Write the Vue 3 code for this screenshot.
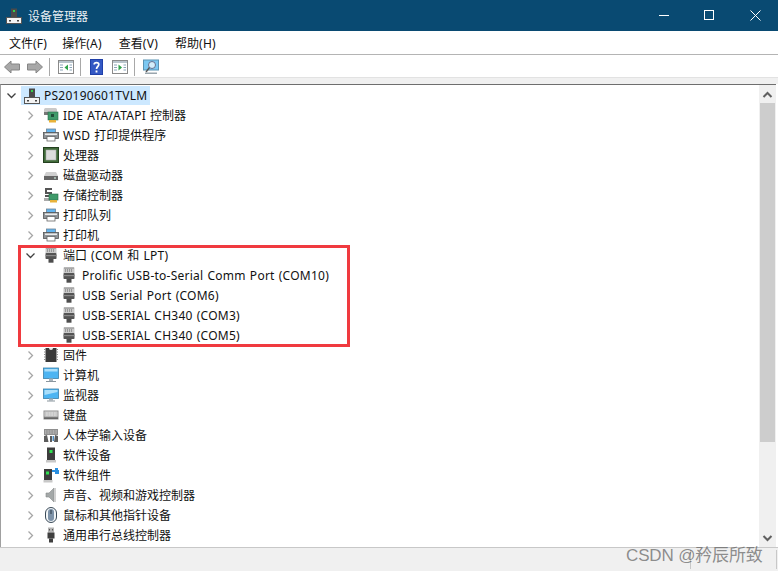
<script setup>
const menus = ['文件(F)', '操作(A)', '查看(V)', '帮助(H)']
const parts = (s) =>
  s.split(/([\u0000-\u024f]+)/).filter(Boolean).map((t) => ({ t, latin: /^[\u0000-\u024f]/.test(t) }))
const rows = [
  { label: 'IDE ATA/ATAPI 控制器', icon: 'ide', kind: 'closed' },
  { label: 'WSD 打印提供程序', icon: 'printer', kind: 'closed' },
  { label: '处理器', icon: 'cpu', kind: 'closed' },
  { label: '磁盘驱动器', icon: 'disk', kind: 'closed' },
  { label: '存储控制器', icon: 'storage', kind: 'closed' },
  { label: '打印队列', icon: 'printer', kind: 'closed' },
  { label: '打印机', icon: 'printer', kind: 'closed' },
  { label: '端口 (COM 和 LPT)', icon: 'port', kind: 'open' },
  { label: 'Prolific USB-to-Serial Comm Port (COM10)', icon: 'port', kind: 'child' },
  { label: 'USB Serial Port (COM6)', icon: 'port', kind: 'child' },
  { label: 'USB-SERIAL CH340 (COM3)', icon: 'port', kind: 'child' },
  { label: 'USB-SERIAL CH340 (COM5)', icon: 'port', kind: 'child' },
  { label: '固件', icon: 'firmware', kind: 'closed' },
  { label: '计算机', icon: 'computer', kind: 'closed' },
  { label: '监视器', icon: 'monitor', kind: 'closed' },
  { label: '键盘', icon: 'keyboard', kind: 'closed' },
  { label: '人体学输入设备', icon: 'hid', kind: 'closed' },
  { label: '软件设备', icon: 'softdev', kind: 'closed' },
  { label: '软件组件', icon: 'softcomp', kind: 'closed' },
  { label: '声音、视频和游戏控制器', icon: 'sound', kind: 'closed' },
  { label: '鼠标和其他指针设备', icon: 'mouse', kind: 'closed' },
  { label: '通用串行总线控制器', icon: 'usb', kind: 'closed' }
]
</script>

<template>
  <div class="window">
    <svg class="defs" width="0" height="0" aria-hidden="true">
      <defs>
        <symbol id="root" viewBox="0 0 16 16">
          <rect x="5" y="0.5" width="6" height="9" fill="#4a4a4a" />
          <rect x="7" y="2" width="2" height="2" fill="#35d04a" />
          <rect x="0.5" y="9.5" width="15" height="6" fill="#f4f4f4" stroke="#555" />
          <rect x="3" y="12" width="2" height="1.5" fill="#444" />
          <rect x="11" y="12" width="2" height="1.5" fill="#444" />
        </symbol>
        <symbol id="ide" viewBox="0 0 16 16">
          <path d="M1 2.500C1 1.500 2 1 3 1h9c1 0 2 .5 2 1.500V5H1z" fill="#c9c9c9" />
          <rect x="1" y="5" width="6" height="3" fill="#777" />
          <rect x="5" y="5" width="10" height="8" fill="#3f9a6a" stroke="#2a6f4c" stroke-width=".6" />
          <rect x="8" y="7" width="3" height="3" fill="#1f4d38" />
          <rect x="6" y="13" width="7" height="2.500" fill="#e8b23a" />
        </symbol>
        <symbol id="printer" viewBox="0 0 16 16">
          <rect x="3.500" y="2" width="9" height="4" fill="#63b4ee" stroke="#6a8296" stroke-width=".8" />
          <rect x="0.500" y="5.500" width="15" height="6" fill="#8f9499" stroke="#555" stroke-width=".8" />
          <rect x="2" y="6.500" width="12" height="1.500" fill="#ececec" />
          <rect x="4" y="9.500" width="8" height="4.500" fill="#fff" stroke="#666" stroke-width=".8" />
        </symbol>
        <symbol id="cpu" viewBox="0 0 16 16">
          <rect x="0.500" y="0.500" width="15" height="15" fill="#3f6a38" stroke="#24401f" />
          <rect x="3" y="3" width="10" height="10" fill="#dcdcdc" stroke="#aaa" stroke-width=".6" />
        </symbol>
        <symbol id="disk" viewBox="0 0 16 16">
          <path d="M3 5h10l2 4H1z" fill="#d0d0d0" />
          <rect x="1" y="9" width="14" height="4" fill="#666" />
          <rect x="11" y="10.500" width="2" height="1" fill="#dfe" />
        </symbol>
        <symbol id="storage" viewBox="0 0 16 16">
          <path d="M2 1h7v2H4v2h5v5H2V8h5V7H2z" fill="#555" />
          <rect x="1" y="11" width="6" height="3" fill="#aaa" />
          <rect x="6" y="7" width="9" height="6" fill="#3f9a6a" stroke="#2a6f4c" stroke-width=".6" />
          <rect x="7" y="13" width="7" height="2.500" fill="#e8b23a" />
        </symbol>
        <symbol id="port" viewBox="0 0 16 16">
          <rect x="2.500" y="0.500" width="11" height="5.500" fill="#c9c9c9" />
          <path d="M3 1h10" stroke="#8a8a8a" />
          <path d="M4.500 2v3M6.500 2v3M8.500 2v3M10.500 2v3" stroke="#8c8c8c" stroke-width=".8" />
          <rect x="2.500" y="6" width="11" height="6" rx=".8" fill="#545454" />
          <rect x="2.500" y="8" width="11" height="1.200" fill="#8a8a8a" />
          <rect x="5.500" y="12" width="5" height="3.700" fill="#4d4d4d" />
        </symbol>
        <symbol id="firmware" viewBox="0 0 16 16">
          <rect x="2.500" y="1" width="11" height="14" fill="#3a3a3a" />
          <path d="M1 2.500h1.500M1 5h1.500M1 7.500h1.500M1 10h1.500M1 12.500h1.500M13.500 2.500H15M13.500 5H15M13.500 7.500H15M13.500 10H15M13.500 12.500H15" stroke="#8a8a8a" />
          <path d="M6 1a2 2 0 0 0 4 0z" fill="#e8e8e8" />
        </symbol>
        <symbol id="computer" viewBox="0 0 16 16">
          <rect x="0.500" y="1" width="15" height="10.500" fill="#4cb4f2" stroke="#3b7fa8" stroke-width=".8" />
          <rect x="1.500" y="2" width="13" height="2.500" fill="#a9defa" />
          <rect x="6" y="11.500" width="4" height="2.500" fill="#a8b4bc" />
          <rect x="3" y="14" width="10" height="1" fill="#8a969e" />
        </symbol>
        <symbol id="monitor" viewBox="0 0 16 16">
          <rect x="0.500" y="2" width="15" height="9.500" fill="#4cb4f2" stroke="#3b7fa8" stroke-width=".8" />
          <path d="M1.500 3h13v2l-13 3z" fill="#a9defa" />
          <rect x="6" y="11.500" width="4" height="2" fill="#a8b4bc" />
          <rect x="4" y="13.500" width="8" height="1" fill="#8a969e" />
        </symbol>
        <symbol id="keyboard" viewBox="0 0 16 16">
          <rect x="0.500" y="3.500" width="15" height="9" fill="#8f8f8f" />
          <rect x="1.500" y="4.500" width="13" height="5" fill="#dedede" />
          <path d="M2 6h12M2 8h12" stroke="#9a9a9a" stroke-width=".7" stroke-dasharray="1 .6" />
          <rect x="1" y="10.500" width="14" height="1.500" fill="#666" />
        </symbol>
        <symbol id="hid" viewBox="0 0 16 16">
          <rect x="1" y="2" width="14" height="6" fill="#8f8f8f" />
          <path d="M2 4h12M2 6h12" stroke="#dedede" stroke-width=".8" stroke-dasharray="1 .6" />
          <path d="M1 15V9l3-1 1.500 7zM7 15V9h2v6zM11 15l1-7 3 1v6z" fill="#5c5c5c" />
          <rect x="9.500" y="9" width="1.500" height="5" fill="#4d8bc0" />
        </symbol>
        <symbol id="softdev" viewBox="0 0 16 16">
          <rect x="4" y="0.500" width="8" height="13" fill="#3d3d3d" />
          <rect x="6.500" y="3" width="3" height="3" fill="#30e050" />
          <rect x="3" y="13" width="10" height="2.500" fill="#c8c8c8" />
        </symbol>
        <symbol id="softcomp" viewBox="0 0 16 16">
          <rect x="1" y="2" width="8" height="12" fill="#3d3d3d" />
          <rect x="3" y="4.500" width="3" height="3" fill="#30e050" />
          <rect x="0.500" y="13" width="9" height="2.500" fill="#c8c8c8" />
          <path d="M9 3h3V1h3v2h1v4h-4V5H9z" fill="#2a8fe0" />
        </symbol>
        <symbol id="sound" viewBox="0 0 16 16">
          <path d="M3 6h3l5-5v14l-5-5H3z" fill="#a4a8a8" stroke="#868a8a" stroke-width=".6" />
          <path d="M11 1v14h2V1z" fill="#d0d0d0" />
        </symbol>
        <symbol id="mouse" viewBox="0 0 16 16">
          <rect x="2.500" y="0.500" width="11" height="15" rx="5.500" fill="#f2f6f8" stroke="#3a4a58" />
          <rect x="5" y="2" width="6" height="12" rx="3" fill="#7d92a8" />
          <rect x="7.400" y="3" width="1.200" height="4" fill="#3a4a58" />
        </symbol>
        <symbol id="usb" viewBox="0 0 16 16">
          <rect x="5" y="0.500" width="6" height="5" fill="#b5b5b5" />
          <path d="M6.500 2v1.500M9.500 2v1.500" stroke="#555" />
          <rect x="4.500" y="5.500" width="7" height="6" fill="#3f3f3f" />
          <rect x="6" y="11.500" width="4" height="4" fill="#3f3f3f" />
        </symbol>
      </defs>
    </svg>

    <header class="titlebar">
      <div class="title-left">
        <svg class="icon"><use href="#root" /></svg>
        <span>设备管理器</span>
      </div>
      <div class="caption">
        <svg width="45" height="31" viewBox="0 0 45 31"><path d="M16 15.500h10" stroke="#fff" /></svg>
        <svg width="45" height="31" viewBox="0 0 45 31"><rect x="16.500" y="10.500" width="9" height="9" fill="none" stroke="#fff" /></svg>
        <svg width="45" height="31" viewBox="0 0 45 31"><path d="M17.500 10.500l10 10M27.500 10.500l-10 10" stroke="#fff" /></svg>
      </div>
    </header>

    <nav class="menubar">
      <span v-for="m in menus" :key="m" class="menu"><span v-for="p in parts(m)" :key="p.t" :class="{ latin: p.latin }">{{ p.t }}</span></span>
    </nav>

    <div class="toolbar">
      <svg width="16" height="16" viewBox="0 0 16 16"><path d="M.5 8 7 2v3h8.500v6H7v3z" fill="#a8a8a8" stroke="#858585" /></svg>
      <svg class="next" width="16" height="16" viewBox="0 0 16 16"><path d="M15.500 8 9 2v3H.5v6H9v3z" fill="#a8a8a8" stroke="#858585" /></svg>
      <i class="sep s1"></i>
      <svg class="after-s1" width="16" height="16" viewBox="0 0 16 16">
        <rect x=".5" y="1.500" width="15" height="13" fill="#fff" stroke="#8a8a8a" />
        <rect x="1" y="2" width="14" height="2" fill="#b9c4cc" />
        <path d="M2 6h3M2 8.500h3M2 11h3M11.500 6H14M11.500 8.500H14M11.500 11H14" stroke="#8aa4b8" />
        <path d="M10 5.500v6L6.500 8.500z" fill="#2fa24a" />
      </svg>
      <i class="sep s2"></i>
      <svg width="13" height="16" viewBox="0 0 14 16" preserveAspectRatio="none">
        <rect width="14" height="16" fill="#1f3fa8" />
        <rect x="1" y="1" width="12" height="14" fill="#3358c4" />
        <path d="M4.500 5.500C4.500 3 9.500 3 9.500 5.500 9.500 7.500 7 7.500 7 10" fill="none" stroke="#fff" stroke-width="1.800" />
        <rect x="6" y="11.500" width="2" height="2" fill="#fff" />
      </svg>
      <svg width="16" height="16" viewBox="0 0 16 16">
        <rect x=".5" y="1.500" width="15" height="13" fill="#fff" stroke="#8a8a8a" />
        <rect x="1" y="2" width="14" height="2" fill="#b9c4cc" />
        <path d="M2 6h3M2 8.500h3M2 11h3M11.500 6H14M11.500 8.500H14M11.500 11H14" stroke="#8aa4b8" />
        <path d="M6.500 5.500v6L10 8.500z" fill="#2fa24a" />
      </svg>
      <i class="sep s2"></i>
      <svg class="after-s1" width="16" height="16" viewBox="0 0 16 16">
        <rect x=".5" y="1" width="15" height="10" fill="#7cc8f2" stroke="#5b93b3" />
        <circle cx="9" cy="6" r="3.500" fill="#d4eefb" stroke="#557" stroke-width=".8" />
        <path d="M6.500 8.500 3 13" stroke="#555" stroke-width="1.400" />
        <rect x="2" y="13.500" width="12" height="1.500" fill="#9aa6ae" />
      </svg>
    </div>

    <div class="gutter"></div>

    <main class="content">
      <div class="tree">
        <div class="row root-row">
          <svg class="chev" width="9" height="9" viewBox="0 0 9 9"><path d="M.5 2.500 4.500 6.500 8.500 2.500" fill="none" stroke="#404040" stroke-width="1.300" /></svg>
          <span class="root-pick">
            <svg class="icon"><use href="#root" /></svg>
            <span class="latin">PS20190601TVLM</span>
          </span>
        </div>
        <div v-for="r in rows" :key="r.label" class="row" :class="r.kind">
          <svg v-if="r.kind !== 'child'" class="chev" width="9" height="9" viewBox="0 0 9 9">
            <path v-if="r.kind === 'closed'" d="M2.500.5 6.500 4.500 2.500 8.500" fill="none" stroke="#a6a6a6" stroke-width="1.300" />
            <path v-else d="M.5 2.500 4.500 6.500 8.500 2.500" fill="none" stroke="#404040" stroke-width="1.300" />
          </svg>
          <svg class="icon"><use :href="'#' + r.icon" /></svg>
          <span class="label"><span v-for="p in parts(r.label)" :key="p.t" :class="{ latin: p.latin }">{{ p.t }}</span></span>
        </div>
      </div>
      <aside class="scrollbar">
        <svg class="arrow" width="17" height="18" viewBox="0 0 17 18"><path d="M4.500 12 8.500 8l4 4" fill="none" stroke="#606060" stroke-width="2" /></svg>
        <div class="thumb"></div>
        <div class="track"></div>
        <svg class="arrow" width="17" height="18" viewBox="0 0 17 18"><path d="M4.500 7l4 4 4-4" fill="none" stroke="#606060" stroke-width="2" /></svg>
      </aside>
    </main>

    <footer class="status">
      <i class="cell"></i>
    </footer>

    <div class="redbox"></div>
    <div class="watermark">CSDN @矜辰所致</div>
  </div>
</template>

<style scoped>
.window {
  position: relative;
  width: 778px;
  height: 571px;
  overflow: hidden;
  display: flex;
  flex-direction: column;
  background: #fff;
  font-family: "Noto Sans", "Noto Sans CJK SC", sans-serif;
  font-size: 12px;
  color: #111;
}
.latin { letter-spacing: 0.25px; word-spacing: 0.7px; }
.defs { position: absolute; }
.icon { width: 16px; height: 16px; flex: none; }
.titlebar {
  height: 31px;
  flex: none;
  display: flex;
  align-items: center;
  justify-content: space-between;
  background: #094a72;
  color: #e8eef2;
}
.title-left { display: flex; align-items: center; gap: 6px; padding-left: 6px; }
.caption { display: flex; }
.caption svg { display: block; }
.menubar {
  height: 23px;
  flex: none;
  display: flex;
  align-items: center;
  gap: 17px;
  padding-left: 9px;
  border-bottom: 1px solid #b4b4b4;
}
.menu:first-child { margin-right: -2px; }
.toolbar {
  height: 22px;
  flex: none;
  box-sizing: border-box;
  display: flex;
  align-items: flex-start;
  gap: 9px;
  padding: 4px 0 0 4px;
}
.toolbar .next { margin-left: -2px; }
.sep { width: 1px; height: 18px; margin-top: -1px; background: #a8a8a8; flex: none; }
.sep.s1 { margin-left: -3px; }
.sep.s2 { margin-left: -3px; }
.after-s1 { margin-left: -1px; }
.gutter { height: 6px; flex: none; background: #f0f0f0; border-top: 1px solid #e2e2e2; }
.content {
  flex: 1;
  min-height: 0;
  display: flex;
  margin-right: 2px;
  border-top: 1px solid #6e6e6e;
  border-left: 1px solid #a0a0a0;
}
.tree { flex: 1; overflow: hidden; }
.row {
  height: 20px;
  display: flex;
  align-items: center;
  white-space: nowrap;
}
.root-row { padding-left: 6px; }
.root-row .chev { margin-right: 5px; }
.root-pick {
  display: flex;
  align-items: center;
  gap: 4px;
  height: 19px;
  align-self: flex-end;
  padding: 0 3px 0 3px;
  background: #cce8ff;
}
.closed, .open { padding-left: 25px; }
.chev { flex: none; margin-right: 8px; }
.closed .icon, .open .icon { margin-right: 4px; }
.child { padding-left: 60px; }
.child .icon { margin-right: 5px; }
.scrollbar {
  width: 17px;
  flex: none;
  display: flex;
  flex-direction: column;
  background: #f0f0f0;
}
.arrow { display: block; flex: none; }
.thumb { height: 339px; flex: none; margin: 0 1px; background: #cdcdcd; }
.track { flex: 1; }
.status {
  height: 24px;
  flex: none;
  display: flex;
  justify-content: flex-end;
  background: #f0f0f0;
  border-top: 1px solid #c8c8c8;
  padding-top: 2px;
  box-sizing: border-box;
}
.cell {
  box-sizing: border-box;
  width: 87px;
  height: 19px;
  margin-right: 1px;
  border-left: 1px solid #c8c8c8;
  border-right: 1px solid #c8c8c8;
  flex: none;
}
.redbox {
  position: absolute;
  left: 18px;
  top: 245px;
  width: 326px;
  height: 96px;
  border: 3px solid #f03a3f;
  pointer-events: none;
}
.watermark {
  position: absolute;
  left: 626px;
  top: 541px;
  font-family: "Liberation Sans", "Noto Sans CJK SC", sans-serif;
  font-size: 17px;
  letter-spacing: -0.15px;
  color: rgba(90, 90, 90, 0.68);
  white-space: nowrap;
}
</style>
